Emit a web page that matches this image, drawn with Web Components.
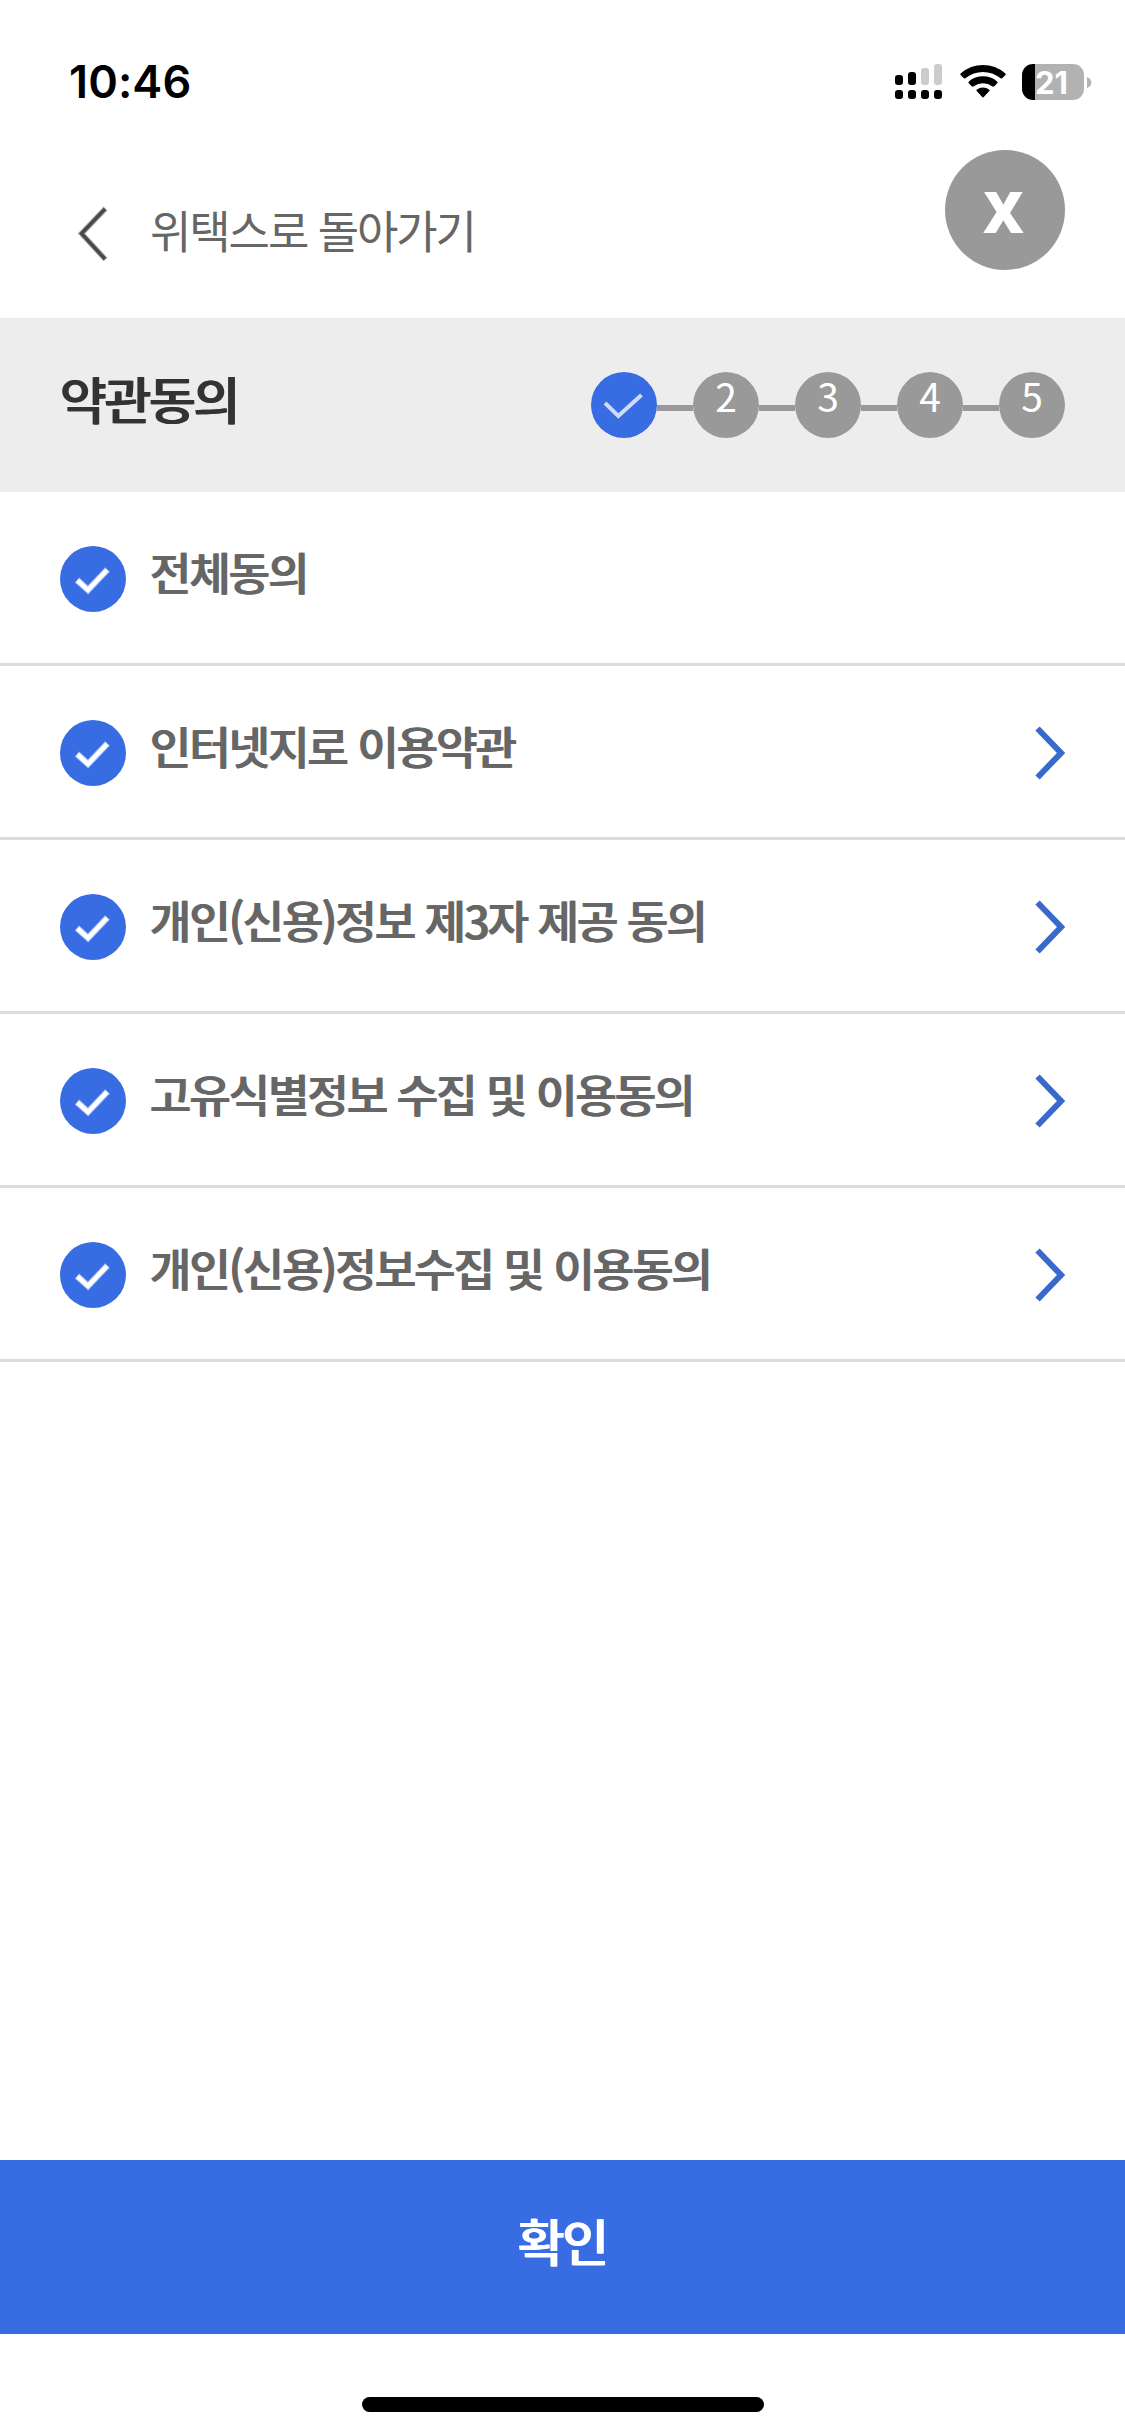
<!DOCTYPE html>
<html lang="ko">
<head>
<meta charset="utf-8">
<title>약관동의</title>
<style>
html,body{margin:0;padding:0;background:#fff}
body{width:1125px;height:2436px;overflow:hidden;font-family:"Noto Sans CJK KR","Noto Sans",sans-serif}
</style>
</head>
<body>
<terms-page></terms-page>
<script>
const define = (name, html) => customElements.define(name, class extends HTMLElement {
  constructor() {
    super();
    const t = document.createElement('template');
    t.innerHTML = html;
    this.attachShadow({mode: 'open'}).append(t.content.cloneNode(true));
  }
});

define('status-bar', `
<style>
:host{display:flex;height:150px;box-sizing:border-box;padding:64px 33px 0 69px;justify-content:space-between;align-items:flex-start;color:#000;font-family:Inter,sans-serif}
time{font-size:45px;font-weight:600;line-height:36px;letter-spacing:.1px}
.icons{display:flex;align-items:flex-start}
svg{display:block}
.wifi{margin:0 15px 0 17px}
.battery{width:62px;height:36px;border-radius:11px;background:linear-gradient(90deg,#000 13px,#b2b2b2 13px);color:#fff;font-size:31px;font-weight:700;line-height:37px;text-align:left;box-sizing:border-box;padding-left:13px;letter-spacing:0}
.nub{margin:13px 0 0 3px}
</style>
<time>10:46</time>
<div class="icons">
<svg width="48" height="36" viewBox="0 0 48 36"><g><rect x="0" y="11" width="8" height="10" rx="3"/><rect x="13" y="8" width="8" height="13" rx="3"/><rect x="26" y="4" width="8" height="17" rx="3" fill="#ccc"/><rect x="39" y="0" width="8" height="21" rx="3" fill="#ccc"/><rect x="0" y="26" width="8" height="9" rx="3"/><rect x="13" y="26" width="8" height="9" rx="3"/><rect x="26" y="26" width="8" height="9" rx="3"/><rect x="39" y="26" width="8" height="9" rx="3"/></g></svg>
<svg class="wifi" width="47" height="36" viewBox="0 0 47 36"><path d="M.8 11.2Q-.2 10.2 .9 9.200Q10.500 1 23 1T45.100 9.200Q46.200 10.200 45.200 11.200L42.400 14Q41.400 15 40.300 14Q32.700 7.900 23 7.900T5.700 14Q4.600 15 3.600 14Z"/><path d="M8.800 19.300Q7.800 18.300 8.900 17.400Q15 12.300 23 12.300T37.100 17.400Q38.200 18.300 37.200 19.300L34.300 22.200Q33.300 23.100 32.200 22.300Q28.200 19.200 23 19.200T13.800 22.300Q12.700 23.100 11.700 22.200Z"/><path d="M16.700 27.100Q15.800 26.200 17 25.400Q19.700 23.500 23 23.500T29 25.400Q30.200 26.200 29.300 27.100L24 32.800Q23 34.200 22 32.800Z"/></svg>
<div class="battery">21</div>
<svg class="nub" width="5" height="12" viewBox="0 0 5 12"><path d="M0 0Q4.300 1.500 4.300 5.500T0 11Z" fill="#b2b2b2"/></svg>
</div>`);

define('page-nav', `
<style>
:host{display:flex;height:168px;box-sizing:border-box;padding:0 60px;align-items:flex-start}
svg{display:block;flex:none;margin:50px 0 0 13px}
.label{margin:47px 0 0 37px;flex:1;font-size:45px;line-height:66px;letter-spacing:-2.1px;color:#666;font-weight:400;white-space:pre}
.close{width:120px;height:120px;border-radius:50%;background:#999;color:#fff;font:800 56px/122px "Open Sans","Noto Sans",sans-serif;text-align:center;text-indent:-3px}
</style>
<svg width="40" height="66" viewBox="0 0 40 66"><path d="M32.500 8.500 8.500 33.500 32.500 59.500" fill="none" stroke="#aaa" stroke-width="5.500"/><path d="M32 9 8.500 33.500 32 59" fill="none" stroke="#484848" stroke-width="3.400"/></svg>
<span class="label"><slot></slot></span>
<div class="close">X</div>`);

define('step-dot', `
<style>
:host{display:block;width:66px;height:66px;border-radius:50%;background:#999;color:#fff;font-size:39px;font-weight:400;line-height:46px;text-align:center}
:host([done]){background:#376ce2}
svg{display:none}
:host([done]) svg{display:block}
</style>
<svg width="66" height="66" viewBox="0 0 66 66"><path d="M14 31 27.300 44 50.500 23" fill="none" stroke="#cfdcf9" stroke-width="4"/></svg><slot></slot>`);

define('step-header', `
<style>
:host{display:flex;height:174px;box-sizing:border-box;padding:0 60px;background:#ededed;justify-content:space-between;align-items:center}
h1{margin:0 0 0 -.7px;font-size:51px;font-weight:500;text-shadow:1.3px 0 0 currentColor;line-height:74px;letter-spacing:-2.4px;color:#333;padding-bottom:15px}
.steps{display:flex;align-items:center}
i{width:36px;height:6px;background:#999;margin-top:6px}
</style>
<h1><slot></slot></h1>
<div class="steps"><step-dot done></step-dot><i></i><step-dot>2</step-dot><i></i><step-dot>3</step-dot><i></i><step-dot>4</step-dot><i></i><step-dot>5</step-dot></div>`);

define('agree-row', `
<style>
:host{display:flex;height:174px;box-sizing:border-box;padding:3px 60px 0;align-items:center;border-bottom:3px solid #dcdcdc}
svg{display:block;flex:none}
.label{flex:1;margin-left:23.300px;font-size:45px;font-weight:500;text-shadow:1.300px 0 0 currentColor;line-height:66px;letter-spacing:-2.03px;color:#666;padding-bottom:15px;white-space:pre}
.go{display:none}
:host([link]) .go{display:block}
</style>
<svg width="66" height="66" viewBox="0 0 66 66"><circle cx="33" cy="33" r="33" fill="#376ce2"/><path d="M17 34 28 44 47.500 23.500" fill="none" stroke="#a9c0f3" stroke-width="6.500"/><path d="M17.500 34.500 28 44 47 24" fill="none" stroke="#fff" stroke-width="4.400"/></svg>
<span class="label"><slot></slot></span>
<svg class="go" width="30" height="54" viewBox="0 0 30 54"><path d="M2.500 2.500 26 27 2.500 51.500" fill="none" stroke="#3969cb" stroke-width="6"/></svg>`);

define('confirm-button', `
<style>
:host{display:block;height:174px;box-sizing:border-box;padding-right:2px;background:#376ce2;color:#fff;text-align:center;font-size:51px;font-weight:500;text-shadow:1.5px 0 0 currentColor;line-height:160px;letter-spacing:-2.3px}
</style><slot></slot>`);

define('home-indicator', `
<style>
:host{display:flex;height:102px;justify-content:center;box-sizing:border-box;padding-top:63px}
i{width:402px;height:15px;border-radius:8px;background:#000}
</style><i></i>`);

define('terms-page', `
<style>
:host{display:flex;flex-direction:column;width:1125px;height:2436px;background:#fff}
main{flex:1}
</style>
<status-bar></status-bar>
<page-nav>위택스로 돌아가기</page-nav>
<step-header>약관동의</step-header>
<main>
<agree-row>전체동의</agree-row>
<agree-row link>인터넷지로 이용약관</agree-row>
<agree-row link>개인(신용)정보 제3자 제공 동의</agree-row>
<agree-row link>고유식별정보 수집 및 이용동의</agree-row>
<agree-row link>개인(신용)정보수집 및 이용동의</agree-row>
</main>
<confirm-button>확인</confirm-button>
<home-indicator></home-indicator>`);
</script>
</body>
</html>
